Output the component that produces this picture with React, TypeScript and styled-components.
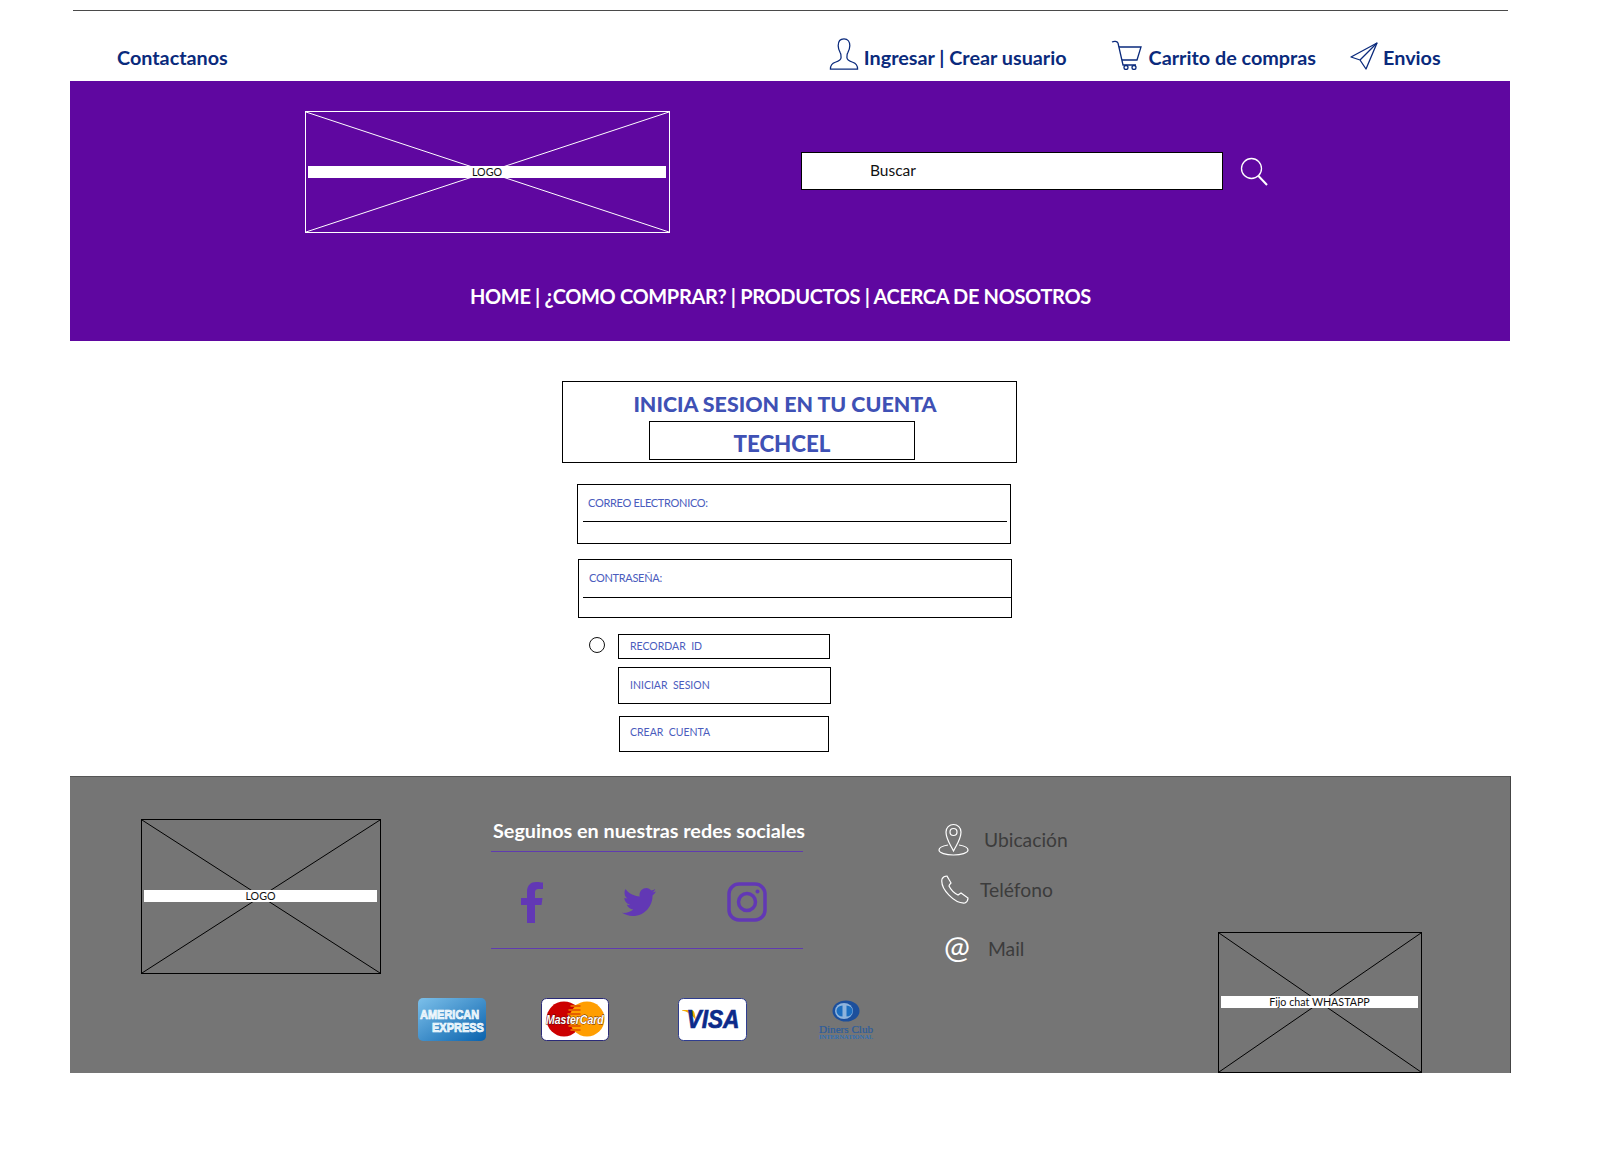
import React from 'react';
import styled, { createGlobalStyle } from 'styled-components';

const GlobalStyle = createGlobalStyle`
  html, body { margin: 0; padding: 0; background: #fff; }
  body { font-family: 'Lato', 'Noto Sans', sans-serif; }
  * { box-sizing: border-box; }
`;

const Page = styled.div`
  width: 1615px;
  height: 1173px;
  padding: 10px 0 0 70px;
  overflow: hidden;
`;

const TopRule = styled.div`
  width: 1435px;
  height: 1px;
  margin-left: 3px;
  background: #4a4a4a;
`;

const TopBar = styled.div`
  height: 70px;
  width: 1440px;
  display: flex;
  align-items: flex-end;
  padding: 0 0 12px 47px;
  color: #0a2a7c;
  font-size: 19.8px;
  font-weight: 700;
`;

const TopLink = styled.a<{ $gap: number; $left?: number }>`
  display: flex;
  align-items: flex-end;
  gap: ${({ $gap }) => $gap}px;
  margin-left: ${({ $left }) => $left ?? 0}px;
  line-height: 24px;
  svg { flex: none; margin-bottom: -1px; }
`;

const Hero = styled.div`
  width: 1440px;
  height: 260px;
  background: #5f07a0;
  padding-top: 30px;
`;

const HeroRow = styled.div`
  display: flex;
  align-items: center;
  padding-left: 235px;
`;

const Wire = styled.div<{ $w: number; $h: number; $line: string }>`
  position: relative;
  flex: none;
  width: ${({ $w }) => $w}px;
  height: ${({ $h }) => $h}px;
  border: 1px solid ${({ $line }) => $line};
  svg { position: absolute; inset: 0; width: 100%; height: 100%; }
  svg line { stroke: ${({ $line }) => $line}; stroke-width: 1; }
`;

const WireLabel = styled.div<{ $top: number }>`
  position: absolute;
  left: 2px;
  right: 3px;
  top: ${({ $top }) => $top}px;
  height: 12px;
  background: #fff;
  color: #111;
  font-size: 10.7px;
  line-height: 12px;
  text-align: center;
`;

const SearchBox = styled.div`
  width: 422px;
  height: 38px;
  margin: 0 0 2px 131px;
  padding-left: 68px;
  background: #fff;
  border: 1px solid #000;
  color: #111;
  font-size: 15.5px;
  line-height: 34px;
`;

const SearchIcon = styled.svg`
  margin: 0 0 2px 17px;
  flex: none;
`;

const HeroNav = styled.nav`
  margin-top: 49px;
  padding-left: 400px;
  color: #fff;
  font-size: 20px;
  font-weight: 700;
  letter-spacing: -0.35px;
  line-height: 28px;
  white-space: nowrap;
`;

const Main = styled.main`
  height: 435px;
  padding: 40px 0 0 492px;
`;

const TitleBox = styled.div`
  width: 455px;
  height: 82px;
  border: 1px solid #000;
  color: #3f51b5;
  font-weight: 900;
  text-align: center;
  padding-top: 8px;
`;

const TitleLine = styled.div`
  font-size: 21.4px;
  line-height: 28px;
  padding-right: 9px;
`;

const BrandBox = styled.div`
  width: 266px;
  height: 39px;
  margin: 3px 0 0 86px;
  border: 1px solid #000;
  font-size: 22.3px;
  line-height: 43px;
`;

const Field = styled.div<{ $left: number; $top: number; $h: number; $labelH: number }>`
  width: 434px;
  height: ${({ $h }) => $h}px;
  margin: ${({ $top }) => $top}px 0 0 ${({ $left }) => $left}px;
  border: 1px solid #000;
  padding-top: 10px;

  > div:first-child { height: ${({ $labelH }) => $labelH}px; }
`;

const FieldLabel = styled.div`
  padding-left: 10px;
  color: #4a5cbd;
  font-size: 11px;
  letter-spacing: -0.3px;
  line-height: 16px;
`;

const FieldRule = styled.div<{ $left: number; $right: number }>`
  height: 1px;
  margin: 0 ${({ $right }) => $right}px 0 ${({ $left }) => $left}px;
  background: #000;
`;

const ActionRow = styled.div`
  display: flex;
  margin: 16px 0 0 27px;
`;

const Radio = styled.span`
  flex: none;
  width: 16px;
  height: 16px;
  margin: 3px 13px 0 0;
  border: 1px solid #111;
  border-radius: 50%;
`;

const ActionList = styled.div`
  display: flex;
  flex-direction: column;
`;

const ActionBox = styled.div<{ $w: number; $h: number; $top: number; $left?: number; $lift: number }>`
  width: ${({ $w }) => $w}px;
  height: ${({ $h }) => $h}px;
  margin: ${({ $top }) => $top}px 0 0 ${({ $left }) => $left ?? 0}px;
  border: 1px solid #000;
  display: flex;
  align-items: center;
  padding: 0 0 ${({ $lift }) => $lift}px ${({ $left }) => ($left ? 10 : 11)}px;
  color: #4a5cbd;
  font-size: 10.5px;
  white-space: pre;
`;

const Footer = styled.footer`
  position: relative;
  width: 1441px;
  height: 297px;
  background: #757575;
  border-top: 1px solid #555;
  border-right: 1px solid #444;
  display: flex;
  padding-left: 71px;
`;

const FooterLogo = styled.div`
  margin-top: 42px;
`;

const SocialColumn = styled.div`
  width: 457px;
  margin-left: 37px;
  display: flex;
  flex-direction: column;
`;

const SocialTitle = styled.div`
  margin: 41px 0 0 75px;
  color: #fff;
  font-size: 19.8px;
  font-weight: 700;
  line-height: 24px;
  white-space: nowrap;
`;

const SocialBand = styled.div`
  width: 312px;
  height: 98px;
  margin: 9px 0 0 73px;
  border-top: 1px solid #5f3bb0;
  border-bottom: 1px solid #5f3bb0;
  display: flex;
  align-items: center;
  color: #6238b5;
  padding-top: 4px;
  svg { flex: none; }
`;

const SocialIcon = styled.span<{ $left: number }>`
  display: flex;
  margin-left: ${({ $left }) => $left}px;
`;

const CardRow = styled.div`
  margin-top: 49px;
  display: flex;
  align-items: flex-start;
`;

const Card = styled.svg<{ $left: number }>`
  flex: none;
  margin-left: ${({ $left }) => $left}px;
`;

const ContactColumn = styled.div`
  width: 280px;
  margin-left: 63px;
  padding-top: 46px;
  display: flex;
  flex-direction: column;
`;

const ContactRow = styled.div<{ $gap: number; $top: number; $left?: number }>`
  display: flex;
  align-items: center;
  gap: ${({ $gap }) => $gap}px;
  margin: ${({ $top }) => $top}px 0 0 ${({ $left }) => $left ?? 0}px;
  color: #3c3c3c;
  font-size: 19.3px;
  height: 32px;
  svg { flex: none; }
`;

const AtSign = styled.span`
  width: 30px;
  flex: none;
  color: #fff;
  font-size: 31px;
  line-height: 32px;
  text-align: center;
  margin-top: -5px;
`;

const ChatBox = styled.div`
  align-self: flex-end;
`;

const WireBox = ({ w, h, line, label, top }: { w: number; h: number; line: string; label: string; top: number }) => (
  <Wire $w={w} $h={h} $line={line}>
    <svg viewBox={`0 0 ${w - 2} ${h - 2}`} preserveAspectRatio="none">
      <line x1="0" y1="0" x2={w - 2} y2={h - 2} />
      <line x1={w - 2} y1="0" x2="0" y2={h - 2} />
    </svg>
    <WireLabel $top={top}>{label}</WireLabel>
  </Wire>
);

const UserIcon = () => (
  <svg width="30" height="32" viewBox="0 0 30 33" fill="none" stroke="#0a2a7c" strokeWidth="1.3">
    <path d="M15 1c-4 0-6 3-6 7 0 3 1 5 2 7 1 1 1 3 1 5 0 3-3 4-6 5-3 1-5 3-5 7h28c0-4-2-6-5-7-3-1-6-2-6-5 0-2 0-4 1-5 1-2 2-4 2-7 0-4-2-7-6-7z" />
  </svg>
);

const CartIcon = () => (
  <svg width="31" height="30" viewBox="0 0 31 30" fill="none" stroke="#0a2a7c" strokeWidth="1.3">
    <path d="M1 2c2-1 5-1 6 1l5 22h13" />
    <path d="M8 7h22l-4 13H11" />
    <circle cx="15" cy="27.500" r="2" />
    <circle cx="23" cy="27.500" r="2" />
  </svg>
);

const SendIcon = () => (
  <svg width="28" height="28" viewBox="0 0 28 28" fill="none" stroke="#0a2a7c" strokeWidth="1.3" strokeLinejoin="round">
    <path d="M27 1 1 15l9 3 6 9z" />
    <path d="M27 1 10 18" />
  </svg>
);

const AmexCard = () => (
  <Card $left={0} width="68" height="43" viewBox="0 0 68 43">
    <defs>
      <linearGradient id="amex" x1="0" y1="0" x2="1" y2="1">
        <stop offset="0" stopColor="#7cc0ea" />
        <stop offset="1" stopColor="#0a62ad" />
      </linearGradient>
    </defs>
    <rect width="68" height="43" rx="5" fill="url(#amex)" />
    <g transform="scale(1 1.15)" fontFamily="Liberation Sans" fontWeight="700" fontSize="11" fill="#d5ebf9" stroke="#fff" strokeWidth="0.600">
      <text x="2" y="18">AMERICAN</text>
      <text x="14" y="29.500">EXPRESS</text>
    </g>
  </Card>
);

const MasterCard = () => (
  <Card $left={55} width="68" height="43" viewBox="0 0 68 43">
    <rect x="0.5" y="0.5" width="67" height="42" rx="5" fill="#fff" stroke="#2a2a78" />
    <circle cx="23" cy="21" r="17.500" fill="#cc0000" />
    <circle cx="46" cy="21" r="17.500" fill="#ff9e00" />
    <path d="M39.500 8h-10M39.500 12h-12M39.500 16h-13M39.500 28h-12M39.500 32h-10" stroke="#e65f00" strokeWidth="2" />
    <g transform="scale(1 1.25)">
      <text x="5" y="21" fontFamily="Liberation Sans" fontStyle="italic" fontWeight="700" fontSize="10.500" fill="#fff" stroke="#4a1010" strokeWidth="0.600" paintOrder="stroke">MasterCard</text>
    </g>
  </Card>
);

const VisaCard = () => (
  <Card $left={69} width="69" height="43" viewBox="0 0 69 43">
    <rect x="0.5" y="0.5" width="68" height="42" rx="5" fill="#fff" stroke="#2f3d8f" />
    <path d="M4 12h9c2 0 3 1 3.500 3l2 9C16 18 11 14 4 12.500z" fill="#f2a900" />
    <text x="35" y="30" textAnchor="middle" fontFamily="Liberation Sans" fontStyle="italic" fontWeight="700" fontSize="26" textLength="53" lengthAdjust="spacingAndGlyphs" fill="#0c2a8a" stroke="#0c2a8a" strokeWidth="0.700">VISA</text>
  </Card>
);

const DinersCard = () => (
  <Card $left={71} width="56" height="44" viewBox="0 0 56 44">
    <ellipse cx="28" cy="13" rx="13.500" ry="10.500" fill="#1c4f9c" />
    <ellipse cx="26" cy="13" rx="9" ry="8" fill="#8fb4dc" />
    <path d="M24.500 7.500v11a6 5.500 0 0 1 0-11zM28.500 7.500a6 5.500 0 0 1 0 11z" fill="#1c6ec0" />
    <text x="28" y="35" textAnchor="middle" fontFamily="Liberation Serif" fontSize="11" textLength="54" lengthAdjust="spacingAndGlyphs" fill="#2a5c9e" stroke="#2a5c9e" strokeWidth="0.200">Diners Club</text>
    <text x="28" y="41" textAnchor="middle" fontFamily="Liberation Serif" fontWeight="700" fontSize="5.500" textLength="54" lengthAdjust="spacingAndGlyphs" fill="#2f6fb5">INTERNATIONAL</text>
  </Card>
);

export default function App() {
  return (
    <Page>
      <GlobalStyle />
      <TopRule />
      <TopBar>
        <TopLink $gap={0}>Contactanos</TopLink>
        <TopLink $gap={5} $left={601}><UserIcon />Ingresar | Crear usuario</TopLink>
        <TopLink $gap={7} $left={44}><CartIcon />Carrito de compras</TopLink>
        <TopLink $gap={5} $left={34}><SendIcon />Envios</TopLink>
      </TopBar>
      <Hero>
        <HeroRow>
          <WireBox w={365} h={122} line="#fff" label="LOGO" top={54} />
          <SearchBox>Buscar</SearchBox>
          <SearchIcon width="28" height="29" viewBox="0 0 28 29" fill="none" stroke="#fff">
            <circle cx="11.500" cy="11.500" r="10" strokeWidth="1.300" />
            <path d="M18.500 19 27 28" strokeWidth="2" />
          </SearchIcon>
        </HeroRow>
        <HeroNav>HOME | ¿COMO COMPRAR? | PRODUCTOS | ACERCA DE NOSOTROS</HeroNav>
      </Hero>
      <Main>
        <TitleBox>
          <TitleLine>INICIA SESION EN TU CUENTA</TitleLine>
          <BrandBox>TECHCEL</BrandBox>
        </TitleBox>
        <Field $left={15} $top={21} $h={60} $labelH={26}>
          <FieldLabel>CORREO ELECTRONICO:</FieldLabel>
          <FieldRule $left={5} $right={3} />
        </Field>
        <Field $left={16} $top={15} $h={59} $labelH={27}>
          <FieldLabel>CONTRASEÑA:</FieldLabel>
          <FieldRule $left={4} $right={0} />
        </Field>
        <ActionRow>
          <Radio />
          <ActionList>
            <ActionBox $w={212} $h={25} $top={0} $lift={1}>RECORDAR  ID</ActionBox>
            <ActionBox $w={213} $h={37} $top={8} $lift={1}>INICIAR  SESION</ActionBox>
            <ActionBox $w={210} $h={36} $top={12} $left={1} $lift={5}>CREAR  CUENTA</ActionBox>
          </ActionList>
        </ActionRow>
      </Main>
      <Footer>
        <FooterLogo>
          <WireBox w={240} h={155} line="#000" label="LOGO" top={70} />
        </FooterLogo>
        <SocialColumn>
          <SocialTitle>Seguinos en nuestras redes sociales</SocialTitle>
          <SocialBand>
            <SocialIcon $left={30}>
              <svg width="22" height="41" viewBox="0 0 22 41" fill="currentColor">
                <path d="M6 41V23H0v-7h6v-6C6 3 10 0 15 0c3 0 5 .3 7 .6V7h-4c-3 0-4 1-4 4v5h7.500l-1 7H14v18z" />
              </svg>
            </SocialIcon>
            <SocialIcon $left={79}>
              <svg width="34" height="28" viewBox="0 0 34 28" fill="currentColor">
                <path d="M34 3.500c-1.300.5-2.400.8-3.600.9 1.300-.8 2.300-2 2.800-3.500-1.300.7-2.600 1.200-4 1.500C28 1 26.300 0 24.400 0c-3.800 0-6.900 3.100-6.900 6.900 0 .5 0 1 .2 1.500C11.900 8.100 6.700 5.400 3.400 1 1.500 5 3 9 5.500 10.500 4.400 10.500 3.300 10.200 2.400 9.700c0 3.500 2.500 6.200 5.600 7-1 .3-2.100.3-3.200.1 1 2.700 3.500 4.500 6.500 4.700C8 24 4.500 25.200 0 24.800 3 26.800 6.700 28 10.700 28c12.800 0 20.100-10.800 19.800-20.500 1.400-1 2.600-2.300 3.500-4z" />
              </svg>
            </SocialIcon>
            <SocialIcon $left={71}>
              <svg width="40" height="40" viewBox="0 0 40 40" fill="none" stroke="currentColor" strokeWidth="3.500">
                <rect x="2" y="2" width="36" height="36" rx="10" />
                <circle cx="20" cy="20" r="8.500" />
                <circle cx="30.500" cy="9.500" r="2" fill="currentColor" stroke="none" />
              </svg>
            </SocialIcon>
          </SocialBand>
          <CardRow>
            <AmexCard />
            <MasterCard />
            <VisaCard />
            <DinersCard />
          </CardRow>
        </SocialColumn>
        <ContactColumn>
          <ContactRow $gap={15} $top={0}>
            <svg width="31" height="33" viewBox="0 0 31 33" fill="none" stroke="#fff" strokeWidth="1.200">
              <path d="M15.500 28C12 21 8 16 8 9a7.500 7.500 0 0 1 15 0c0 7-4 12-7.500 19z" />
              <circle cx="15.500" cy="9" r="3.500" />
              <path d="M10 22C4 23 1 25 1 27c0 3 7 5 14.500 5S30 30 30 27c0-2-3-4-9-5" />
            </svg>
            Ubicación
          </ContactRow>
          <ContactRow $gap={11} $top={18} $left={2}>
            <svg width="29" height="29" viewBox="0 0 29 29" fill="none" stroke="#fff" strokeWidth="1.200">
              <path d="M2 4c1-2 3-3 5-3 1 2 3 5 4 7-1 1-2 2-2 3 2 4 5 7 9 9l3-2 7 5c0 2-1 4-3 5C15 29 0 14 2 4z" />
            </svg>
            Teléfono
          </ContactRow>
          <ContactRow $gap={16} $top={27} $left={4}>
            <AtSign>@</AtSign>
            Mail
          </ContactRow>
        </ContactColumn>
        <ChatBox>
          <WireBox w={204} h={141} line="#000" label="Fijo chat WHASTAPP" top={63} />
        </ChatBox>
      </Footer>
    </Page>
  );
}
